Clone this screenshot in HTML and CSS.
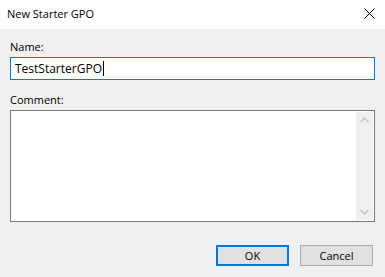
FILE: index.html
```html
<!DOCTYPE html>
<html lang="en">
<head>
  <meta charset="UTF-8" />
  <title>New Starter GPO</title>
  <link rel="stylesheet" href="styles.css">
</head>
<body>
  <div id="dialog">
    <div id="title-bar">
      <span id="title">New Starter GPO</span>
      <svg id="close" width="11" height="11" viewBox="0 0 11 11">
        <path d="M0.5 0.5 L10.5 10.5 M10.5 0.5 L0.5 10.5" stroke="#000" stroke-width="1" fill="none"/>
      </svg>
    </div>

    <div id="content">
      <label class="field-label">Name:</label>
      <div id="name-input">TestStarterGPO<span class="caret"></span></div>

      <label class="field-label comment-label">Comment:</label>
      <div id="comment-box">
        <textarea id="comment"></textarea>
        <div class="scrollbar">
          <svg width="17" height="17" viewBox="0 0 17 17">
            <path d="M4.5 10 L8.5 6 L12.5 10" stroke="#c2c2c2" stroke-width="1.4" fill="none"/>
          </svg>
          <svg width="17" height="17" viewBox="0 0 17 17">
            <path d="M4.5 7 L8.5 11 L12.5 7" stroke="#c2c2c2" stroke-width="1.4" fill="none"/>
          </svg>
        </div>
      </div>

      <div id="buttons">
        <button class="dlg-button default">OK</button>
        <button class="dlg-button">Cancel</button>
      </div>
    </div>
  </div>
</body>
</html>
```

FILE: styles.css
```css
* {
  box-sizing: border-box;
  margin: 0;
  padding: 0;
}

body {
  font-family: 'Open Sans', 'Noto Sans', sans-serif;
  font-size: 11px;
  color: #000;
  background: #f0f0f0;
  width: 385px;
  height: 277px;
  overflow: hidden;
}

#title-bar {
  height: 29px;
  background: #fff;
  display: flex;
  align-items: center;
  justify-content: space-between;
  padding: 0 10px 0 7px;
}

#title {
  margin-top: -2px;
}

#close {
  margin-top: -3px;
}

#content {
  display: flex;
  flex-direction: column;
  padding: 10px 10px 0 10px;
}

.field-label {
  display: block;
  line-height: 16px;
  height: 16px;
  margin-bottom: 2px;
}

.comment-label {
  margin-top: 12px;
}

#name-input {
  height: 23px;
  border: 1px solid #0078d7;
  background: #fff;
  padding: 0 4px;
  font-size: 12px;
  line-height: 20px;
  display: flex;
  align-items: center;
}

.caret {
  display: inline-block;
  width: 1px;
  height: 15px;
  background: #000;
  margin-left: 1px;
}

#comment-box {
  height: 112px;
  border: 1px solid #7a7a7a;
  background: #fff;
  display: flex;
}

#comment {
  flex: 1;
  border: none;
  outline: none;
  resize: none;
  background: transparent;
  font: inherit;
}

.scrollbar {
  width: 17px;
  margin: 1px 1px 1px 0;
  background: #f0f0f0;
  display: flex;
  flex-direction: column;
  justify-content: space-between;
}

#buttons {
  display: flex;
  justify-content: flex-end;
  gap: 11px;
  margin-top: 23px;
  padding-right: 2px;
}

.dlg-button {
  width: 73px;
  height: 21px;
  font-family: inherit;
  font-size: 11px;
  background: #e1e1e1;
  border: 1px solid #adadad;
  color: #000;
}

.dlg-button.default {
  border: 2px solid #0078d7;
}
```
